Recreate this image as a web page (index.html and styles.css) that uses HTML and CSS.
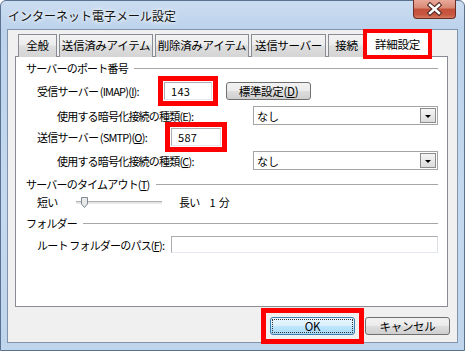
FILE: index.html
```html
<!DOCTYPE html>
<html lang="ja">
<head>
  <meta charset="UTF-8">
  <title>インターネット電子メール設定</title>
  <link rel="stylesheet" href="styles.css">
</head>
<body>
  <div class="window">
    <!-- title bar -->
    <div class="titlebar">
      <span class="title">インターネット電子メール設定</span>
      <div class="close">
        <svg width="43" height="18" viewBox="0 0 43 18">
          <path d="M17 5 L26 13 M26 5 L17 13" stroke="#4a2420" stroke-width="4.5" stroke-linecap="square"/>
          <path d="M17 5 L26 13 M26 5 L17 13" stroke="#fff" stroke-width="2.5" stroke-linecap="square"/>
        </svg>
      </div>
    </div>

    <div class="client">
      <div class="tabs">
        <div class="tab t-general">全般</div>
        <div class="tab t-sent">送信済みアイテム</div>
        <div class="tab t-deleted">削除済みアイテム</div>
        <div class="tab t-server">送信サーバー</div>
        <div class="tab t-conn">接続</div>
        <div class="tab t-adv active mark mark-tab">詳細設定</div>
      </div>

      <div class="panel">
        <div class="group">
          <span>サーバーのポート番号</span><span class="rule"></span>
        </div>

        <div class="row r-imap">
          <span class="lbl w-imap">受信サーバー (IMAP)(<u>I</u>):</span>
          <div class="textbox port-in mark mark-box">143</div>
          <div class="btn btn-default-set">標準設定(<u>D</u>)</div>
        </div>

        <div class="row sub r-enc1">
          <span class="lbl w-enc">使用する暗号化接続の種類(<u>E</u>):</span>
          <div class="select"><span>なし</span><span class="drop"></span></div>
        </div>

        <div class="row r-smtp">
          <span class="lbl w-smtp">送信サーバー (SMTP)(<u>O</u>):</span>
          <div class="textbox port-out mark mark-box">587</div>
        </div>

        <div class="row sub r-enc2">
          <span class="lbl w-enc">使用する暗号化接続の種類(<u>C</u>):</span>
          <div class="select"><span>なし</span><span class="drop"></span></div>
        </div>

        <div class="group g-timeout">
          <span>サーバーのタイムアウト(<u>T</u>)</span><span class="rule"></span>
        </div>

        <div class="row r-slider">
          <span class="lbl w-short">短い</span>
          <div class="track">
            <svg class="thumb" width="7" height="11" viewBox="0 0 7 11">
              <path d="M0.5 0.5 H6.5 V7 L3.5 10.5 L0.5 7 Z" fill="#e9e9e9" stroke="#7e8a96"/>
            </svg>
          </div>
          <span class="long">長い</span><span class="num">1</span><span>分</span>
        </div>

        <div class="group g-folder">
          <span>フォルダー</span><span class="rule"></span>
        </div>

        <div class="row r-path">
          <span class="lbl w-path">ルート フォルダーのパス(<u>F</u>):</span>
          <div class="textbox path"></div>
        </div>
      </div>

      <div class="buttons">
        <div class="mark mark-ok">
          <div class="btn ok"><span class="focus">OK</span></div>
        </div>
        <div class="btn">キャンセル</div>
      </div>
    </div>
  </div>
</body>
</html>
```

FILE: styles.css
```css
html, body {
  margin: 0;
  padding: 0;
}

body {
  width: 465px;
  height: 351px;
  overflow: hidden;
  background: #fff;
  font-family: "Noto Sans CJK JP", "Liberation Sans", sans-serif;
  font-size: 12px;
  color: #000;
}

.window {
  box-sizing: border-box;
  width: 465px;
  height: 351px;
  border: 1px solid #5b7190;
  border-radius: 6px 6px 0 0;
  background: linear-gradient(#cadcf0, #bcd3ec 28px, #c4d9ef 60%, #bfd5ec);
  display: flex;
  flex-direction: column;
}

/* title bar */
.titlebar {
  height: 28px;
  display: flex;
  align-items: center;
  padding-left: 7px;
}

.title {
  font-size: 12px;
  color: #111;
  text-shadow: 0 0 6px #fff, 0 0 3px #fff;
}

.close {
  margin-left: auto;
  margin-right: 8px;
  margin-top: -1px;
  align-self: flex-start;
  width: 43px;
  height: 19px;
  box-sizing: border-box;
  border: 1px solid #6c2d24;
  border-top: none;
  border-radius: 0 0 4px 4px;
  background: linear-gradient(#e9a99a, #d78873 45%, #c4503a 50%, #c7553f 80%, #d57a60);
  overflow: hidden;
}

.close svg {
  display: block;
  margin: 0 0 0 -1px;
}

/* client area */
.client {
  flex: 1;
  margin: 0 6px 7px 6px;
  border: 1px solid #8294ab;
  background: #f0f0f0;
  padding: 2px 9px 0 7px;
  display: flex;
  flex-direction: column;
}

.tabs {
  display: flex;
  align-items: flex-end;
  height: 25px;
  padding-left: 3px;
  position: relative;
  z-index: 1;
  margin-bottom: -1px;
  font-size: 11.5px;
}

.tab {
  box-sizing: border-box;
  height: 23px;
  margin-right: 2px;
  border: 1px solid #898c95;
  border-bottom: none;
  background: linear-gradient(#f3f3f3, #ececec 45%, #dedede 50%, #d4d4d4);
  text-align: center;
  line-height: 21px;
  letter-spacing: -0.3px;
}

.t-general { width: 39px; }
.t-sent { width: 94px; }
.t-deleted { width: 94px; }
.t-server { width: 75px; }
.t-conn { width: 37px; }
.t-adv { width: 65px; }

.tab.active {
  height: 26px;
  margin: 0 0 0 -2px;
  background: #fff;
  line-height: 24px;
  position: relative;
}

.mark {
  outline: 5px solid #ff0000;
}

.mark-tab {
  outline-width: 4px;
  outline-offset: -2px;
}

.mark-box {
  outline-offset: 1px;
}

.mark-ok {
  outline-offset: 4px;
}

/* tab page */
.panel {
  box-sizing: border-box;
  height: 251px;
  border: 1px solid #898c95;
  background: #fff;
  padding: 0 9px 0 10px;
  font-size: 11px;
  letter-spacing: -0.8px;
}

.group {
  height: 14px;
  margin-top: 4px;
  display: flex;
  align-items: center;
  gap: 6px;
}

.rule {
  flex: 1;
  height: 1px;
  background: #a6a6a6;
  margin-top: 1px;
}

.g-timeout { margin-top: 7px; }
.g-folder { margin-top: 6px; }

.row {
  display: flex;
  align-items: center;
  padding-left: 11px;
}

.row.sub {
  padding-left: 31px;
}

.lbl {
  flex: none;
  white-space: nowrap;
}

.w-imap { width: 127px; }
.w-smtp { width: 134px; }
.w-path { width: 134px; }
.w-enc { width: 196px; }
.w-short { width: 39px; }

.r-imap { height: 18px; margin-top: 7px; }
.r-enc1 { height: 19px; margin-top: 6px; }
.r-smtp { height: 18px; margin-top: 3px; }
.r-enc2 { height: 19px; margin-top: 5px; }
.r-slider { height: 16px; margin-top: 3px; }
.r-path { height: 17px; margin-top: 6px; }

.textbox {
  box-sizing: border-box;
  height: 100%;
  border: 1px solid #abadb3;
  border-right-color: #dbdfe6;
  border-bottom-color: #e3e9ef;
  background: #fff;
  padding-left: 6px;
  line-height: 16px;
  letter-spacing: 0.3px;
}

.port-in { width: 48px; }
.port-out { width: 50px; }
.path { flex: 1; }

.select {
  box-sizing: border-box;
  width: 185px;
  height: 19px;
  border: 1px solid #a5a5a5;
  background: #fff;
  display: flex;
  align-items: center;
  justify-content: space-between;
  padding: 0 1px 0 3px;
  letter-spacing: 0;
}

.drop {
  box-sizing: border-box;
  width: 16px;
  height: 15px;
  border: 1px solid #8c8c8c;
  background: linear-gradient(#f6f6f6, #dcdcdc);
  position: relative;
}

.drop::after {
  content: "";
  position: absolute;
  left: 4px;
  top: 6px;
  border-left: 3px solid transparent;
  border-right: 3px solid transparent;
  border-top: 3px solid #000;
}

/* slider */
.track {
  width: 86px;
  height: 3px;
  border-top: 1px solid #b0b0b0;
  border-bottom: 1px solid #eaeaea;
  background: #e2e2e2;
  box-sizing: border-box;
  position: relative;
  margin-right: 17px;
}

.thumb {
  position: absolute;
  left: 5px;
  top: -5px;
}

.num {
  margin: 0 4px 0 10px;
}

/* push buttons */
.btn {
  box-sizing: border-box;
  width: 85px;
  height: 18px;
  border: 1px solid #707070;
  border-radius: 3px;
  background: linear-gradient(#f2f2f2, #ebebeb 48%, #dddddd 52%, #cfcfcf);
  text-align: center;
  line-height: 16px;
  font-size: 11.5px;
  letter-spacing: -0.3px;
}

.btn-default-set {
  margin-left: 14px;
}

.buttons {
  display: flex;
  justify-content: flex-end;
  gap: 10px;
  margin-top: 10px;
  margin-right: -2px;
}

.btn.ok {
  border-color: #3c7fb1;
  background: linear-gradient(#eaf6fd, #d9f0fc 48%, #bee6fd 52%, #a7d9f5);
  padding: 1px;
}

.focus {
  display: block;
  height: 100%;
  box-sizing: border-box;
  border: 1px dotted #333;
  line-height: 12px;
}
```
